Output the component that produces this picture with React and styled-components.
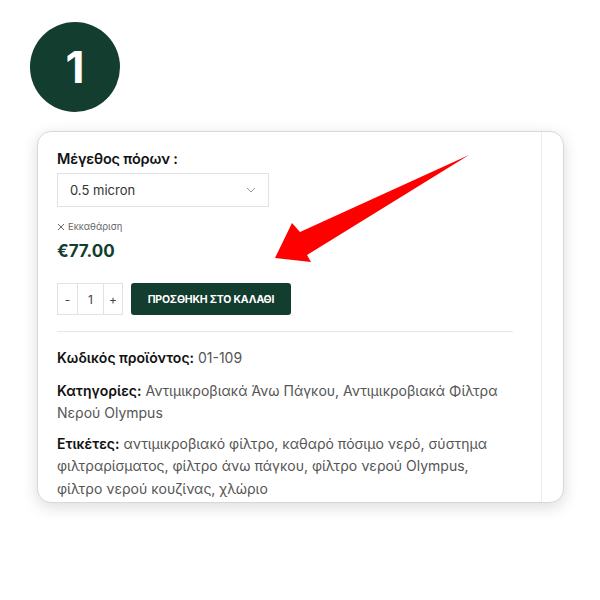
import React from "react";
import styled, { createGlobalStyle } from "styled-components";

const GlobalStyle = createGlobalStyle`
  body {
    margin: 0;
    background: #ffffff;
    font-family: Inter, "Noto Sans", sans-serif;
  }
`;

const Page = styled.div`
  position: relative;
  width: 600px;
  height: 600px;
  padding: 22px 0 0 30px;
  box-sizing: border-box;
`;

const StepBadge = styled.div`
  width: 90px;
  height: 90px;
  border-radius: 50%;
  background: #133d2f;
  color: #fff;
  display: flex;
  align-items: center;
  justify-content: center;
  font-size: 44px;
  font-weight: 700;
`;

const Card = styled.div`
  margin: 19px 0 0 7px;
  width: 527px;
  height: 372px;
  box-sizing: border-box;
  border: 1px solid #d8d8d8;
  border-radius: 14px;
  background: #fff;
  box-shadow: 0 4px 16px rgba(0, 0, 0, 0.14);
  overflow: hidden;
  display: flex;
`;

const Content = styled.div`
  flex: 1;
  padding: 18px 28px 0 19px;
  color: #222;
`;

const Strip = styled.div`
  width: 21px;
  border-left: 1px solid #ececec;
`;

const Label = styled.div`
  font-size: 14.5px;
  font-weight: 600;
  color: #111;
  margin-bottom: 6px;
  letter-spacing: -0.2px;
`;

const Select = styled.div`
  width: 212px;
  height: 34px;
  box-sizing: border-box;
  border: 1px solid #e2e2e2;
  display: flex;
  align-items: center;
  justify-content: space-between;
  padding: 0 12px 0 12px;
  font-size: 13px;
  color: #333;
`;

const Clear = styled.div`
  margin-top: 14px;
  font-size: 9.5px;
  color: #666;
  display: flex;
  align-items: center;
  gap: 3px;
`;

const Price = styled.div`
  margin-top: 9px;
  font-size: 17px;
  font-weight: 700;
  color: #133d2f;
`;

const CartRow = styled.div`
  margin-top: 22px;
  display: flex;
  gap: 8px;
  padding-bottom: 16px;
  border-bottom: 1px solid #e6e6e6;
`;

const Qty = styled.div`
  display: flex;
  height: 32px;
  border: 1px solid #e2e2e2;
  box-sizing: border-box;
`;

const QtyCell = styled.div`
  width: ${(p) => p.$w}px;
  display: flex;
  align-items: center;
  justify-content: center;
  font-size: 12px;
  color: #444;
  border-left: ${(p) => (p.$first ? "none" : "1px solid #e2e2e2")};
`;

const CartButton = styled.div`
  width: 160px;
  height: 32px;
  border-radius: 3px;
  background: #133d2f;
  color: #fff;
  font-size: 10.5px;
  font-weight: 700;
  display: flex;
  align-items: center;
  justify-content: center;
  letter-spacing: -0.2px;
`;

const Meta = styled.div`
  font-size: 14px;
  line-height: 22.5px;
  color: #555;
  margin-top: ${(p) => p.$top}px;
  b {
    color: #111;
    font-weight: 600;
  }
`;

const Arrow = styled.svg`
  position: absolute;
  left: 0;
  top: 0;
  pointer-events: none;
`;

export default function App() {
  return (
    <>
      <GlobalStyle />
      <Page>
        <StepBadge>1</StepBadge>
        <Card>
          <Content>
            <Label>Μέγεθος πόρων :</Label>
            <Select>
              <span>0.5 micron</span>
              <svg width="10" height="6" viewBox="0 0 10 6">
                <path d="M1 1l4 4 4-4" fill="none" stroke="#999" strokeWidth="1" />
              </svg>
            </Select>
            <Clear>
              <svg width="8" height="8" viewBox="0 0 8 8">
                <path d="M1 1l6 6M7 1L1 7" stroke="#666" strokeWidth="1" />
              </svg>
              Εκκαθάριση
            </Clear>
            <Price>€77.00</Price>
            <CartRow>
              <Qty>
                <QtyCell $w={19} $first>-</QtyCell>
                <QtyCell $w={25}>1</QtyCell>
                <QtyCell $w={18}>+</QtyCell>
              </Qty>
              <CartButton>ΠΡΟΣΘΗΚΗ ΣΤΟ ΚΑΛΑΘΙ</CartButton>
            </CartRow>
            <Meta $top={15}>
              <b>Κωδικός προϊόντος:</b> 01-109
            </Meta>
            <Meta $top={10}>
              <b>Κατηγορίες:</b> Αντιμικροβιακά Άνω Πάγκου, Αντιμικροβιακά Φίλτρα Νερού Olympus
            </Meta>
            <Meta $top={8}>
              <b>Ετικέτες:</b> αντιμικροβιακό φίλτρο, καθαρό πόσιμο νερό, σύστημα φιλτραρίσματος, φίλτρο άνω πάγκου, φίλτρο νερού Olympus, φίλτρο νερού κουζίνας, χλώριο
            </Meta>
          </Content>
          <Strip />
        </Card>
        <Arrow width="600" height="600" viewBox="0 0 600 600">
          <path
            d="M275 258 L292 223 L300 232 L469 155 L307 255 L311 262 Z"
            fill="#ff0000"
          />
        </Arrow>
      </Page>
    </>
  );
}
